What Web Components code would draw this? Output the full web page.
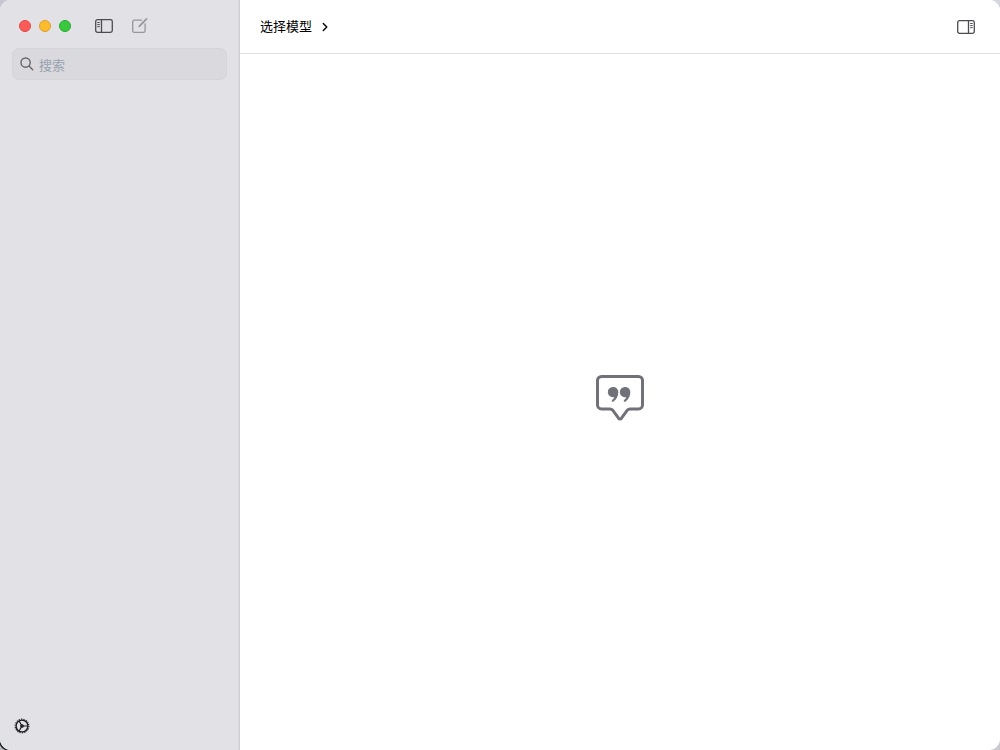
<!DOCTYPE html>
<html lang="zh-CN">
<head>
<meta charset="utf-8">
<meta name="viewport" content="width=device-width, initial-scale=1">
<title>选择模型</title>
<style>
html, body { height: 100%; margin: 0; }
body {
  font: 13px/20px "Liberation Sans", "Noto Sans CJK SC", sans-serif;
  background: radial-gradient(circle at 11px calc(100% - 11px), #17191c 12px, #b9babd 13px) left bottom / 11px 11px no-repeat, conic-gradient(#d3d5df 25%, #c9c9cf 25% 50%, #17191c 50% 75%, #c5c6d0 75%);
}
</style>
</head>
<body>
<chat-window>
  <side-bar slot="sidebar"></side-bar>
  <chat-header slot="header">选择模型</chat-header>
  <empty-chat></empty-chat>
</chat-window>
<script>
function define(name, html) {
  const template = document.createElement('template');
  template.innerHTML = html;
  customElements.define(name, class extends HTMLElement {
    constructor() {
      super();
      this.attachShadow({ mode: 'open' }).append(template.content.cloneNode(true));
    }
  });
}

define('icon-button', `
<style>
  :host { display: block; flex: none; }
  button { display: flex; align-items: center; justify-content: center; margin: 0; padding: 0; border: 0; background: none; color: inherit; font: inherit; }
</style>
<button type="button" aria-label="操作"><slot></slot></button>`);

define('window-controls', `
<style>
  :host { display: flex; gap: 8px; }
  button { box-sizing: border-box; width: 12px; height: 12px; padding: 0; border: 1px solid #df4744; border-radius: 50%; background: #fc5b57; }
  .min { border-color: #de9f2a; background: #fdbb2d; }
  .max { border-color: #25ab2b; background: #3ac840; }
</style>
<button type="button" aria-label="关闭"></button>
<button type="button" class="min" aria-label="最小化"></button>
<button type="button" class="max" aria-label="缩放"></button>`);

define('search-field', `
<style>
  :host { display: block; }
  label { box-sizing: border-box; display: flex; align-items: center; gap: 4px; height: 32px; padding: 0 7px; border: 1px solid #d5d5d9; border-radius: 7px; background: #d9d9de; color: #66666a; }
  svg { flex: none; }
  input { flex: 1; min-width: 0; height: 24px; margin: 2px 0 0; padding: 0; border: 0; outline: 0; background: none; font: inherit; color: #333; }
  input::placeholder { color: #98a1b0; opacity: 1; }
</style>
<label>
  <svg width="15" height="16" viewBox="0 0 15 16" fill="none" stroke="currentColor" stroke-width="1.4" stroke-linecap="round"><circle cx="5.6" cy="6.6" r="4.6"/><path d="M9 10L12.7 13.7"/></svg>
  <input type="search" placeholder="搜索" aria-label="搜索">
</label>`);

define('side-bar', `
<style>
  :host { box-sizing: border-box; display: flex; flex-direction: column; height: 100%; padding: 0 12px 14px; border-right: 1px solid #cfcfd2; background: #e2e1e6; box-shadow: inset -1px 0 #dcdbdf; }
  header { display: flex; align-items: center; height: 48px; padding: 4px 7px 0; box-sizing: border-box; }
  .toggle { margin-left: 23px; color: #4c4c50; }
  .compose { margin-left: 17px; color: #97979b; }
  footer { margin-top: auto; padding-left: 2px; color: #1c1c1e; }
  svg { display: block; }
</style>
<header>
  <window-controls></window-controls>
  <icon-button class="toggle"><svg width="20" height="16" viewBox="0 0 20 16" fill="none" stroke="currentColor" stroke-width="1.3"><rect x="1.7" y="1.7" width="16.6" height="12.6" rx="1.8"/><path d="M7.5 1.7v12.6"/><path d="M3.3 4.5h2.5M3.3 6.6h2.5M3.3 8.7h2.5" stroke-width="1"/></svg></icon-button>
  <icon-button class="compose"><svg width="17" height="18" viewBox="0 0 17 18" fill="none" stroke="currentColor" stroke-width="1.3" stroke-linecap="round"><path d="M10.5 3.2H3.4A1.7 1.7 0 0 0 1.7 4.9v8.800a1.7 1.7 0 0 0 1.7 1.700h9a1.7 1.7 0 0 0 1.7-1.700V7"/><path d="M7.2 10.400l.6-2 6.400-6.400 1.300 1.300-6.400 6.400z" fill="currentColor" stroke="none"/><path d="M15.300 2.100l.2-.2" stroke-width="1.700"/></svg></icon-button>
</header>
<search-field></search-field>
<footer>
  <icon-button><svg width="16" height="20" viewBox="-8 -10 16 20" fill="none" stroke="currentColor"><circle r="5.9" stroke-width="1.4"/><circle r="6.9" stroke-width="1.1" stroke-dasharray="1.2 1.21"/><path d="M0 0H5.5M0 0L-2.900 -5M0 0L-2.900 5" stroke-width="1.2"/><circle r="1.500" fill="currentColor" fill-opacity=".6" stroke-width=".8"/></svg></icon-button>
</footer>`);

define('chat-header', `
<style>
  :host { box-sizing: border-box; display: flex; align-items: center; justify-content: space-between; height: 54px; padding: 0 24px 0 20px; border-bottom: 1px solid #e1e1e2; background: #fff; color: #000; }
  .model { display: flex; align-items: center; gap: 9px; padding: 1px 0 0; border: 0; background: none; font: inherit; color: inherit; }
  .panel { color: #4c4c50; }
  svg { display: block; }
</style>
<button type="button" class="model"><slot></slot><svg width="8" height="12" viewBox="0 0 8 12" fill="none" stroke="currentColor" stroke-width="1.4" stroke-linecap="round" stroke-linejoin="round"><path d="M2.3 2.4L5.8 6 2.3 9.6"/></svg></button>
<icon-button class="panel"><svg width="20" height="16" viewBox="0 0 20 16" fill="none" stroke="currentColor" stroke-width="1.3"><rect x="1.7" y="1.7" width="16.6" height="12.6" rx="1.8"/><path d="M12.5 1.7v12.6"/><path d="M14.2 4.5h2.5M14.2 6.6h2.5M14.2 8.7h2.5" stroke-width="1"/></svg></icon-button>`);

define('empty-chat', `
<style>
  :host { display: flex; flex: 1; align-items: center; justify-content: center; min-height: 0; color: #717179; }
  svg { display: block; }
</style>
<svg width="48" height="54" viewBox="0 0 48 54" role="img" aria-label="对话"><path d="M5.5 1.5h37a4 4 0 0 1 4 4v24.4a4 4 0 0 1-4 4H34.2c-1.3 0-2.3.5-3.100 1.500l-5.600 7.800c-.8 1-2.200 1-3 0l-5.600-7.800c-.8-1-1.800-1.500-3.100-1.500H5.500a4 4 0 0 1-4-4V5.500a4 4 0 0 1 4-4z" fill="none" stroke="currentColor" stroke-width="3"/><g fill="currentColor"><path id="q" d="M17.200 12a5.100 5.100 0 1 0 1.100 10c-.4 1.300-1.200 2.100-2.100 2.900-1.400 1.300.3 2.700 1.700 1.400 2.700-2.300 4.400-5.400 4.400-9.100 0-3.100-2.200-5.200-5.100-5.200z"/><use href="#q" x="12"/></g></svg>`);

define('chat-window', `
<style>
  :host { display: grid; grid-template-columns: 240px minmax(0, 1fr); min-height: 100vh; border-radius: 11px; overflow: hidden; background: #fff; }
  main { display: flex; flex-direction: column; min-width: 0; }
</style>
<slot name="sidebar"></slot>
<main><slot name="header"></slot><slot></slot></main>`);
</script>
</body>
</html>
